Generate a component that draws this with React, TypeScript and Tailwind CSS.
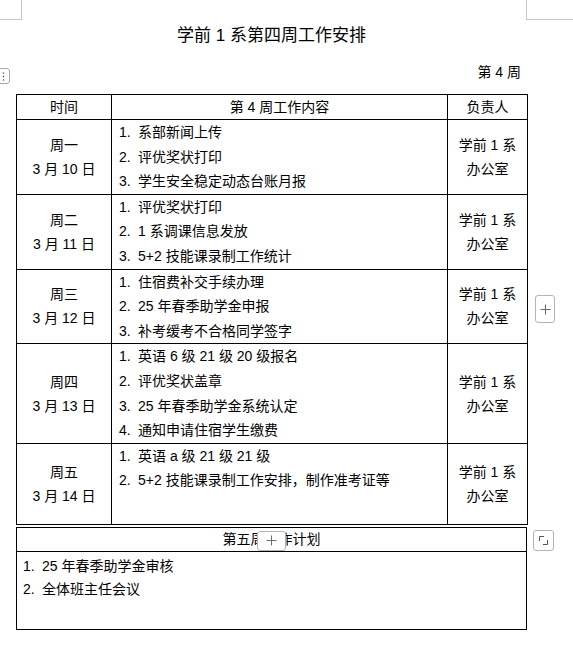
import React from 'react';

type DayRow = { day: string; date: string; items: string[]; h: number };

const rows: DayRow[] = [
  { day: '周一', date: '3 月 10 日', items: ['系部新闻上传', '评优奖状打印', '学生安全稳定动态台账月报'], h: 60 },
  { day: '周二', date: '3 月 11 日', items: ['评优奖状打印', '1 系调课信息发放', '5+2 技能课录制工作统计'], h: 60 },
  { day: '周三', date: '3 月 12 日', items: ['住宿费补交手续办理', '25 年春季助学金申报', '补考缓考不合格同学签字'], h: 60 },
  {
    day: '周四',
    date: '3 月 13 日',
    items: ['英语 6 级 21 级 20 级报名', '评优奖状盖章', '25 年春季助学金系统认定', '通知申请住宿学生缴费'],
    h: 60,
  },
  { day: '周五', date: '3 月 14 日', items: ['英语 a 级 21 级 21 级', '5+2 技能课录制工作安排，制作准考证等'], h: 81 },
];

const nextWeek = ['25 年春季助学金审核', '全体班主任会议'];

function Item({ n, text }: { n: number; text: string }) {
  return (
    <div className="flex whitespace-nowrap">
      <span className="inline-block w-[19px] shrink-0">{n}.</span>
      <span>{text}</span>
    </div>
  );
}

function PlusIcon() {
  return (
    <svg width="11" height="11" viewBox="0 0 11 11">
      <path d="M5.5 0.5v10M0.5 5.5h10" stroke="#6b6b6b" strokeWidth="1" />
    </svg>
  );
}

export default function App() {
  return (
    <div className="relative w-[573px] h-[647px] overflow-hidden bg-white text-black font-['Liberation_Sans','Noto_Sans_CJK_SC',sans-serif]">
      {/* page corner marks */}
      <div className="absolute left-0 top-0 w-[22px] h-[20px] border-r border-b border-[#c6c6c6]" />
      <div className="absolute left-[526px] top-0 w-[50px] h-[20px] border-l border-b border-[#c6c6c6]" />

      {/* table move handle */}
      <div className="absolute left-[-8px] top-[68px] w-[18px] h-[16px] rounded-[3px] border border-[#a8a8a8] bg-white flex items-center justify-end pr-[4px]">
        <svg width="3" height="9" viewBox="0 0 3 9">
          <circle cx="1.5" cy="1" r="0.8" fill="#555" />
          <circle cx="1.5" cy="4.5" r="0.8" fill="#555" />
          <circle cx="1.5" cy="8" r="0.8" fill="#555" />
        </svg>
      </div>

      {/* add column button */}
      <div className="absolute left-[535px] top-[295px] w-[20px] h-[28px] rounded-[3px] border border-[#b4b4b4] bg-white flex items-center justify-center">
        <PlusIcon />
      </div>

      {/* resize handle */}
      <div className="absolute left-[533px] top-[530px] w-[21px] h-[21px] rounded-[3px] border border-[#b4b4b4] bg-white flex items-center justify-center">
        <svg width="11" height="11" viewBox="0 0 11 11">
          <path d="M1.5 6V1.5H6M9.5 5V9.5H5" fill="none" stroke="#555" strokeWidth="1" />
        </svg>
      </div>

      <div className="pl-[16px] pt-[24px] w-[527px]">
        <h1 className="text-center text-[17px] leading-[24px] font-normal">学前 1 系第四周工作安排</h1>
        <p className="mt-[12px] text-right pr-[6px] text-[14px] leading-[24px]">第 4 周</p>

        <table className="mt-[10px] w-[511px] table-fixed border-collapse text-[14px]">
          <colgroup>
            <col className="w-[95px]" />
            <col className="w-[336px]" />
            <col className="w-[80px]" />
          </colgroup>
          <tbody>
            <tr className="h-[25px]">
              <td className="border border-black p-0 text-center align-middle">时间</td>
              <td className="border border-black p-0 text-center align-middle">第 4 周工作内容</td>
              <td className="border border-black p-0 text-center align-middle">负责人</td>
            </tr>
            {rows.map((r) => (
              <tr key={r.day} style={{ height: r.h }}>
                <td className="border border-black p-0 text-center align-middle leading-[24px]">
                  <div>{r.day}</div>
                  <div>{r.date}</div>
                </td>
                <td className="border border-black p-0 pl-[7px] align-top leading-[24.6px]">
                  {r.items.map((t, i) => (
                    <Item key={i} n={i + 1} text={t} />
                  ))}
                </td>
                <td className="border border-black p-0 text-center align-middle leading-[24px]">
                  <div>学前 1 系</div>
                  <div>办公室</div>
                </td>
              </tr>
            ))}
          </tbody>
        </table>

        <div className="relative mt-[2px]">
          <table className="w-[511px] table-fixed border-collapse text-[14px]">
            <tbody>
              <tr className="h-[24px]">
                <td className="border border-black p-0 text-center align-middle">第五周工作计划</td>
              </tr>
              <tr className="h-[78px]">
                <td className="border border-black p-0 pl-[6px] pt-[3px] align-top leading-[23.5px]">
                  {nextWeek.map((t, i) => (
                    <Item key={i} n={i + 1} text={t} />
                  ))}
                </td>
              </tr>
            </tbody>
          </table>
          {/* add row button */}
          <div className="absolute left-[241px] top-[4px] w-[29px] h-[20px] rounded-[3px] border border-[#b4b4b4] bg-white flex items-center justify-center">
            <PlusIcon />
          </div>
        </div>
      </div>
    </div>
  );
}
